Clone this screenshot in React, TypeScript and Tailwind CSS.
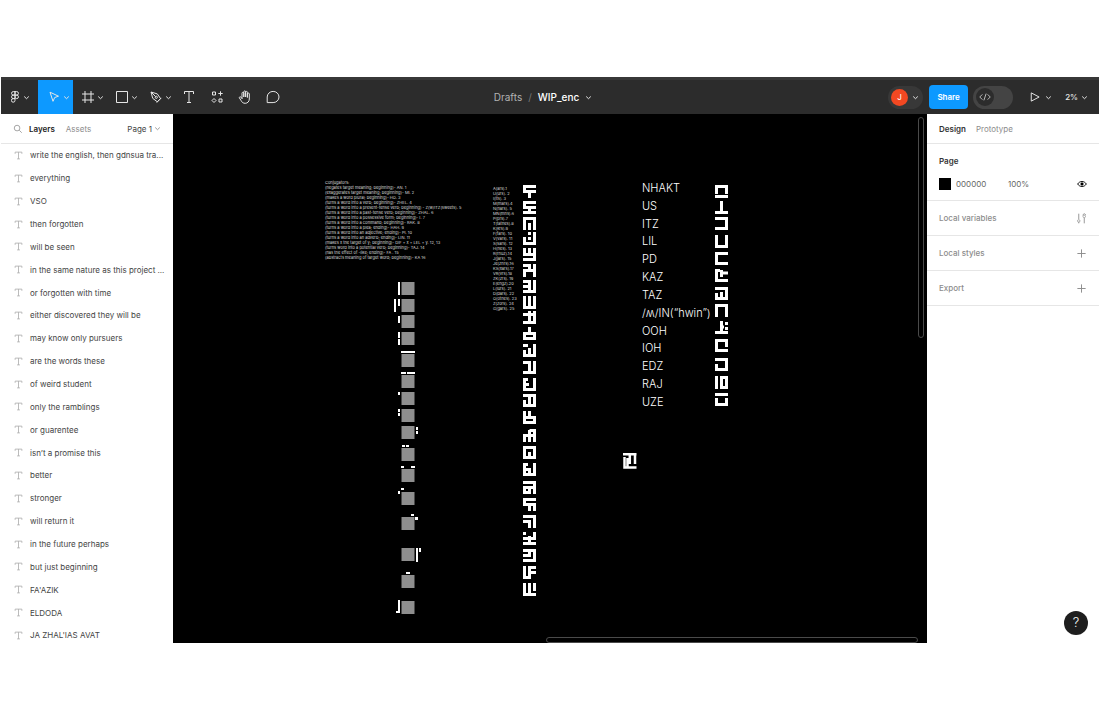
import React from "react";

const layers = [
  "write the english, then gdnsua tra...", "everything", "VSO", "then forgotten", "will be seen",
  "in the same nature as this project ...", "or forgotten with time", "either discovered they will be",
  "may know only pursuers", "are the words these", "of weird student", "only the ramblings", "or guarentee",
  "isn’t a promise this", "better", "stronger", "will return it", "in the future perhaps", "but just beginning",
  "FA'AZIK", "ELDODA", "JA ZHAL'IAS AVAT",
];

const conjugators = [
  "Conjugators:", "(negates target meaning; beginning)- AN. 1", "(exaggerates target meaning; beginning)- MI. 2",
  "(makes a word plural; beginning)- HO. 3", "(turns a word into a verb; beginning)- ZHEL. 4",
  "(turns a word into a present-tense verb; beginning) - Z(w/ITZ(sweets). 5",
  "(turns a word into a past-tense verb; beginning)- ZHAL. 6", "(turns a word into a possessive form; beginning)- I. 7",
  "(turns a word into a command; beginning)- RAK. 8", "(turns a word into a plea; ending)- HAH. 9",
  "(turns a word into an adjective; ending)- PI. 10", "(turns a word into an adverb; ending)- LIN. 11",
  "(makes x the target of y; beginning)- DIF + x + LEL + y. 12, 13", "(turns word into a potential verb; beginning)- TAJ. 14",
  "(has the effect of -like; ending)- FA . 15", "(abstracts meaning of target word; beginning)- KA 16",
];

const sounds = [
  "A(ars).1", "U(urs). 2", "I(its). 3", "M(mars).4", "N(nars). 5", "MN(mns).6", "P(prs).7", "T(tathes).8", "K(krs).9",
  "F(fars). 10", "V(vars). 11", "S(sars). 12", "H(hes). 13", "R(rhuz).14", "J(jars). 15", "Je(zhrs).16", "KS(xars).17",
  "VR(vrs).18", "ZK(zrs). 19", "E(engz).20", "L(lurs). 21", "D(dars). 22", "O(othes). 23", "Z(zors). 24", "G(gars). 25",
];

const words = ["NHAKT", "US", "ITZ", "LIL", "PD", "KAZ", "TAZ", "/ʍ/IN(“hwin”)", "OOH", "IOH", "EDZ", "RAJ", "UZE"];

/* Glyph strokes live in a 13-unit square; the number is the glyph's y on the canvas. */
const alphabet: [number, string][] = [
  [71, "M0 1.5H13M1.5 1V8M0 6.5H13M6.5 6V13"],
  [87, "M0 1.5H13M1.5 1V6M6.5 5V13M0 6.5H13M0 11.5H13"],
  [103, "M0 1.5H13M1.5 1V13M6.5 6V13M11.5 1V13"],
  [118, "M5 1.5H8M11.5 0V13M1.5 5V13M5 6.5H8M0 11.5H13"],
  [134, "M1.5 0V8M6.5 0V8M11.5 0V13M0 6.5H13M0 11.5H13"],
  [150, "M0 1.5H8M6.5 0V8M0 6.5H13M1.5 6V13M11.5 0V13"],
  [166, "M0 1.5H8M6.5 0V13M11.5 0V13M0 6.5H8M0 11.5H13"],
  [182, "M1.5 0V13M6.5 0V13M11.5 0V13M0 11.5H13"],
  [197, "M6.5 0V13M0 3.5H13M0 11.5H13M11.5 0V13"],
  [213, "M6.5 0V8M0 6.5H13M1.5 6V13M11.5 6V13M0 11.5H13"],
  [230, "M0 1.5H5M6.5 4V13M11.5 0V13M0 11.5H13M1.5 6V13"],
  [247, "M0 1.5H8M6.5 0V13M11.5 0V13M0 11.5H13"],
  [264, "M1.5 0V13M0 6.5H6M0 1.5H5M11.5 0V13M0 11.5H13"],
  [280, "M0 1.5H13M1.5 6V13M6.5 1V13M11.5 1V13M0 11.5H13"],
  [297, "M1.5 0V13M0 6.5H13M6.5 0V8M11.5 6V13M0 11.5H13"],
  [315, "M6.5 1V13M6.5 1.5H13M11.5 1V13M0 6.5H13M1.5 6V13"],
  [332, "M1.5 0V13M0 1.5H13M6.5 6V13M11.5 1V13M0 11.5H13"],
  [349, "M0 1.5H5M1.5 1V13M6.5 5V13M11.5 0V13M0 6.5H6M0 11.5H13"],
  [367, "M0 1.5H13M11.5 1V13M1.5 6V13M6.5 6V13M0 6.5H13M0 11.5H6"],
  [384, "M0 1.5H13M1.5 1V8M0 6.5H13M6.5 6V13M11.5 6V13"],
  [401, "M0 1.5H13M6.5 6V13M0 6.5H8M11.5 0V13M1.5 6V8"],
  [418, "M1.5 0V3M6.5 4V13M11.5 0V8M0 6.5H13M0 11.5H13"],
  [435, "M0 1.5H13M11.5 1V13M0 6.5H8M6.5 1V8M0 11.5H13"],
  [452, "M1.5 0V13M6.5 0V13M6 1.5H13M6 6.5H13M0 11.5H8"],
  [469, "M1.5 0V13M6.5 0V13M11.5 0V8M0 11.5H13"],
];

const compounds: [number, string][] = [
  [71, "M1.5 9V1.5H11.5V9M0 11.5H13"],
  [87, "M6.5 0V11M0 11.5H13"],
  [103, "M0 1.5H11.5V11.5H0"],
  [121, "M1.5 0V11.5H11.5V0"],
  [138, "M13 1.5H1.5V11.5H13"],
  [155, "M13 11.5H1.5V1.5H5M6.5 1V8M6.5 4H13"],
  [173, "M0 1.5H11.5V13M1.5 6V11.5H11.5M6.5 5V11.5"],
  [190, "M1.5 13V1.5H11.5V13"],
  [207, "M6.5 0V11.5M0 11.5H13M6 6H9M10 2.5H13M10 7.5H13"],
  [225, "M13 11.5H1.5V1.5H11.5V8"],
  [244, "M0 1.5H11.5V11.5H1.5V6"],
  [262, "M1.5 0V13M6.5 1.5H11.5V11.5H6.5Z"],
  [279, "M0 1.5H13M1.5 5V11.5H11.5V5"],
];

const squares = [168, 185, 201, 218, 240, 261, 278, 295, 312, 334, 355, 378, 403, 434, 461, 487];

const ticks =
  "M225 168h2v13h-2zM221 185h2v13h-2zM225 185h2v7h-2zM225 202h2v7h-2zM225 218h2v6h-2zM225 225h2v6h-2zM228 237h14v2h-14zM228 258h5v2h-5zM234 258h8v2h-8zM225 278h2v3h-2zM225 295h2v3h-2zM225 299h2v3h-2zM243 313h2v3h-2zM243 317h2v3h-2zM229 331h3v2h-3zM233 331h3v2h-3zM228 352h3v2h-3zM238 352h4v2h-4zM225 377h2v3h-2zM228 374h3v2h-3zM238 400h3v2h-3zM242 403h3v3h-3zM243 434h2v14h-2zM246 434h2v4h-2zM233 458h4v2h-4zM225 486h2v13h-4v-2h2z";

function Chevron({ className = "" }: { className?: string }) {
  return (
    <svg className={`size-[7px] shrink-0 ${className}`} viewBox="0 0 7 7" fill="none" stroke="currentColor" strokeWidth="1">
      <path d="M1.2 2.5 3.5 4.7 5.8 2.5" />
    </svg>
  );
}

function Icon({ children, className = "size-4" }: { children: React.ReactNode; className?: string }) {
  return (
    <svg className={`shrink-0 ${className}`} viewBox="0 0 16 16" fill="none" stroke="currentColor" strokeWidth="1">
      {children}
    </svg>
  );
}

function Tool({ label, active, menu, children }: { label: string; active?: boolean; menu?: boolean; children: React.ReactNode }) {
  const width = active ? "w-[35px]" : menu ? "w-[34px]" : "w-[28px]";
  return (
    <button
      aria-label={label}
      className={`flex h-full items-center justify-center ${width} ${menu ? "gap-px pl-1" : ""} ${active ? "bg-[#0d99ff]" : ""}`}
    >
      {children}
      {menu && <Chevron />}
    </button>
  );
}

function Toolbar() {
  return (
    <header className="grid h-[37px] shrink-0 grid-cols-[1fr_auto_1fr] border-t-[3px] border-[#383838] bg-[#2c2c2c] text-[#e6e6e6]">
      <div className="flex items-center">
        <button aria-label="Main menu" className="flex h-full w-[37px] items-center justify-center gap-1 pl-px">
          <svg className="h-3 w-2" viewBox="0 0 8 12" fill="none" stroke="currentColor" strokeWidth="1">
            <path d="M4 .6H2.3a1.75 1.75 0 0 0 0 3.5H4zM4 .6h1.7a1.75 1.75 0 0 1 0 3.5H4zM4 4.1H2.3a1.75 1.75 0 0 0 0 3.5H4zM4 7.6H2.3A1.8 1.8 0 1 0 4 9.4z" />
            <circle cx="5.7" cy="5.85" r="1.75" />
          </svg>
          <Chevron />
        </button>
        <Tool label="Move" active menu>
          <Icon><path d="m4 3.2 8.5 4-3.8 1.3L7 12.3z" /></Icon>
        </Tool>
        <Tool label="Frame" menu>
          <Icon><path d="M5 2v12M11 2v12M2 5h12M2 11h12" /></Icon>
        </Tool>
        <Tool label="Rectangle" menu>
          <Icon><path d="M2.5 2.5h11v11h-11z" /></Icon>
        </Tool>
        <Tool label="Pen" menu>
          <Icon>
            <path d="m3 3 1.7 6.3 4.6 3.5 3.3-3.2-3.3-4.7zM3 3l4.6 4.6M8.7 13.5l4.6-4.6" />
            <circle cx="8.3" cy="8.3" r="1.1" />
          </Icon>
        </Tool>
        <Tool label="Text">
          <Icon><path d="M3.5 5V2.5h9V5M8 2.5v11M6 13.5h4" /></Icon>
        </Tool>
        <Tool label="Resources">
          <Icon><path d="M3.5 3h3v3h-3zM11.5 2.3v4.4M9.3 4.5h4.4M10 10h3v3h-3z" /><path d="m5 9.5 2 2-2 2-2-2z" /></Icon>
        </Tool>
        <Tool label="Hand">
          <Icon>
            <path d="M5 10V4.2a.9.9 0 0 1 1.8 0V8 2.8a.9.9 0 0 1 1.8 0V8 3.3a.9.9 0 0 1 1.8 0V8.5 5a.9.9 0 0 1 1.9 0v5c0 2.5-1.7 4.3-4.1 4.3-2 0-3.2-.9-4.1-2.7L2.4 8.9c-.4-.9.8-1.6 1.5-.8L5 9.5" />
          </Icon>
        </Tool>
        <Tool label="Comment">
          <Icon><path d="M2.2 13.6V8a5.9 5.6 0 1 1 5.9 5.6z" /></Icon>
        </Tool>
      </div>
      <button className="flex items-center gap-[6px] pr-[14px] text-[10px]">
        <span className="text-[#b3b3b3]">Drafts</span>
        <span className="text-[#777]">/</span>
        <span className="font-medium text-white">WIP_enc</span>
        <Chevron />
      </button>
      <div className="flex items-center justify-end pr-[11px]">
        <button aria-label="Account" className="mr-[6px] flex h-[23px] w-[35px] items-center justify-between rounded-full bg-[#383838] pr-1 pl-[3px]">
          <span className="flex size-[17px] items-center justify-center rounded-full bg-[#f24822] text-[8px] text-white">J</span>
          <Chevron />
        </button>
        <button className="mr-[5px] h-6 w-[39px] rounded-[4px] bg-[#0d99ff] text-[8px] font-semibold text-white">Share</button>
        <button aria-label="Dev mode" className="mr-4 flex h-[23px] w-10 items-center rounded-full bg-[#444] pl-[3px]">
          <span className="flex size-[18px] items-center justify-center rounded-full bg-[#2c2c2c]">
            <Icon className="size-3"><path d="M4.5 4.5 1 8l3.5 3.5M11.5 4.5 15 8l-3.5 3.5M9.5 3.5l-3 9" /></Icon>
          </span>
        </button>
        <button aria-label="Present" className="mr-[13px] flex items-center gap-1">
          <Icon className="size-3"><path strokeWidth="1.3" d="M3 2.5v11L13.5 8z" /></Icon>
          <Chevron />
        </button>
        <button className="flex items-center gap-[3px] text-[8px] font-medium">2% <Chevron /></button>
      </div>
    </header>
  );
}

function LayersPanel() {
  return (
    <aside className="flex w-[172px] shrink-0 flex-col overflow-hidden bg-white text-[8px] text-[#444]">
      <div className="flex h-[30px] shrink-0 items-center border-b border-[#e6e6e6] px-3">
        <Icon className="size-[10px] text-[#999]"><circle cx="6.5" cy="6.5" r="4.5" strokeWidth="1.4" /><path strokeWidth="1.4" d="m10 10 4 4" /></Icon>
        <button className="ml-[6px] font-semibold text-[#222]">Layers</button>
        <button className="ml-[11px] text-[#8c8c8c]">Assets</button>
        <button className="ml-auto flex items-center gap-[2px]">Page 1 <Chevron className="text-[#999]" /></button>
      </div>
      <ul className="-mb-1 flex min-h-0 flex-1 flex-col">
        {layers.map((name) => (
          <li key={name} className="flex min-h-0 flex-1 items-center gap-[7px] pl-[13px]">
            <Icon className="size-[9px] text-[#aaa]"><path strokeWidth="1.4" d="M2 5V2h12v3M8 2v12M5.5 14h5" /></Icon>
            <span className="whitespace-nowrap">{name}</span>
          </li>
        ))}
      </ul>
    </aside>
  );
}

function Canvas() {
  return (
    <main className="relative min-w-0 flex-1 overflow-hidden bg-black text-white">
      <div className="absolute top-[66px] left-[152px] flex h-[79px] flex-col justify-between text-[4px] leading-[5px] whitespace-nowrap text-[#ddd]">
        {conjugators.map((line) => <p key={line}>{line}</p>)}
      </div>
      <div className="absolute top-[72px] left-[320px] flex h-[124px] flex-col justify-between text-[4px] leading-[5px] whitespace-nowrap text-[#ddd]">
        {sounds.map((line) => <p key={line}>{line}</p>)}
      </div>
      <div className="absolute top-[66px] left-[469px] flex h-[230px] flex-col justify-between text-[11px] leading-4 font-light whitespace-nowrap">
        {words.map((word) => <p key={word}>{word}</p>)}
      </div>
      <svg className="absolute top-0 left-0 h-[529px] w-[754px]" viewBox="0 0 754 529" fill="none">
        <g stroke="#fff" strokeWidth="3">
          {alphabet.map(([y, d]) => <path key={y} d={d} transform={`translate(350 ${y})`} />)}
          {compounds.map(([y, d]) => <path key={y} d={d} transform={`translate(542 ${y})`} />)}
        </g>
        <path stroke="#fff" strokeWidth="2.5" d="M0 1.2H13.500M1.5 4V14.500H13.500M6.800 1V11M12 1V11M4.500 5V14" transform="translate(450 339)" />
        {squares.map((y) => <rect key={y} x="228.5" y={y} width="13" height="13" fill="#8e8e8e" />)}
        <path d={ticks} fill="#fff" />
      </svg>
      <div className="absolute top-[3px] right-[3px] h-[221px] w-[6px] rounded-full border border-[#4a4a4a]" />
      <div className="absolute right-[9px] bottom-0 h-[6px] w-[372px] rounded-full border border-[#4a4a4a]" />
    </main>
  );
}

function PanelRow({ title, children }: { title: string; children: React.ReactNode }) {
  return (
    <section className="flex h-[35px] items-center justify-between border-b border-[#e6e6e6] px-3 text-[#8c8c8c]">
      <h2 className="font-medium">{title}</h2>
      <button aria-label={title}>{children}</button>
    </section>
  );
}

function DesignPanel() {
  const plus = <Icon className="size-[11px]"><path strokeWidth="1.4" d="M8 2v12M2 8h12" /></Icon>;
  return (
    <aside className="relative w-[172px] shrink-0 bg-white text-[8px] text-[#333]">
      <div className="flex h-[30px] items-center gap-[10px] border-b border-[#e6e6e6] px-3">
        <button className="font-semibold">Design</button>
        <button className="text-[#8c8c8c]">Prototype</button>
      </div>
      <section className="h-[57px] border-b border-[#e6e6e6] px-3 pt-[11px]">
        <h2 className="leading-3 font-semibold">Page</h2>
        <div className="mt-[11px] flex h-3 items-center text-[#666]">
          <span className="size-3 bg-black" />
          <span className="ml-[5px] w-[52px]">000000</span>
          <span>100%</span>
          <button aria-label="Toggle visibility" className="ml-auto text-black">
            <Icon className="size-[10px]"><path strokeWidth="1.5" d="M1 8c3.5-5.3 10.5-5.3 14 0-3.5 5.3-10.5 5.3-14 0z" /><circle cx="8" cy="8" r="2" fill="currentColor" /></Icon>
          </button>
        </div>
      </section>
      <PanelRow title="Local variables">
        <Icon className="size-[11px]"><path strokeWidth="1.3" d="M4 1v8M4 13v2M12 7v8M9.5 3 12 1l2.5 2" /><circle cx="4" cy="11.5" r="1.8" /><circle cx="12" cy="5" r="1.8" /></Icon>
      </PanelRow>
      <PanelRow title="Local styles">{plus}</PanelRow>
      <PanelRow title="Export">{plus}</PanelRow>
      <button aria-label="Help" className="absolute right-[11px] bottom-2 flex size-6 items-center justify-center rounded-full bg-[#1e1e1e] text-[13px] font-light text-white">?</button>
    </aside>
  );
}

export default function App() {
  return (
    <div className="flex h-screen flex-col bg-white px-px py-[77px] font-['Inter',sans-serif]">
      <Toolbar />
      <div className="flex min-h-0 flex-1">
        <LayersPanel />
        <Canvas />
        <DesignPanel />
      </div>
    </div>
  );
}
